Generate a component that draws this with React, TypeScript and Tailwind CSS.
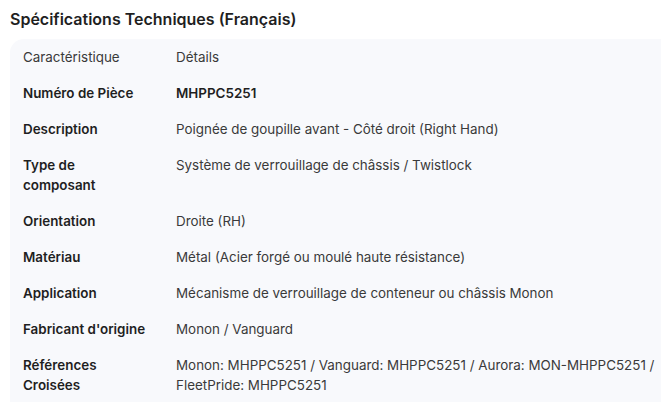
const rows: { label: string; value: string }[] = [
  { label: 'Numéro de Pièce', value: 'MHPPC5251' },
  { label: 'Description', value: 'Poignée de goupille avant - Côté droit (Right Hand)' },
  { label: 'Type de composant', value: 'Système de verrouillage de châssis / Twistlock' },
  { label: 'Orientation', value: 'Droite (RH)' },
  { label: 'Matériau', value: 'Métal (Acier forgé ou moulé haute résistance)' },
  { label: 'Application', value: 'Mécanisme de verrouillage de conteneur ou châssis Monon' },
  { label: "Fabricant d'origine", value: 'Monon / Vanguard' },
  {
    label: 'Références Croisées',
    value: 'Monon: MHPPC5251 / Vanguard: MHPPC5251 / Aurora: MON-MHPPC5251 / FleetPride: MHPPC5251',
  },
];

const App = () => {
  return (
    <div className="bg-white w-[662px] h-[402px] overflow-hidden font-['Inter',sans-serif] text-[#1f1f1f]">
      <h2 className="pl-[10px] pt-[9px] h-[39px] text-[16px] leading-5 font-semibold">
        Spécifications Techniques (Français)
      </h2>
      <div className="ml-[10px] mr-px bg-[#f8f9fc] rounded-tl-[14px] text-[13.4px] leading-5">
        <div className="flex py-2 text-[#3a3a3a]">
          <div className="w-[166px] pl-[13px] pr-[27px] shrink-0">Caractéristique</div>
          <div className="flex-1 pr-1">Détails</div>
        </div>
        {rows.map((row, i) => (
          <div key={row.label} className="flex py-2">
            <div className="w-[166px] pl-[13px] pr-[27px] shrink-0 font-semibold text-[#1f1f1f]">{row.label}</div>
            <div className={i === 0 ? 'flex-1 pr-1 font-semibold text-[#1f1f1f]' : 'flex-1 pr-1 text-[#3a3a3a]'}>
              {row.value}
            </div>
          </div>
        ))}
      </div>
    </div>
  );
};

export default App;
